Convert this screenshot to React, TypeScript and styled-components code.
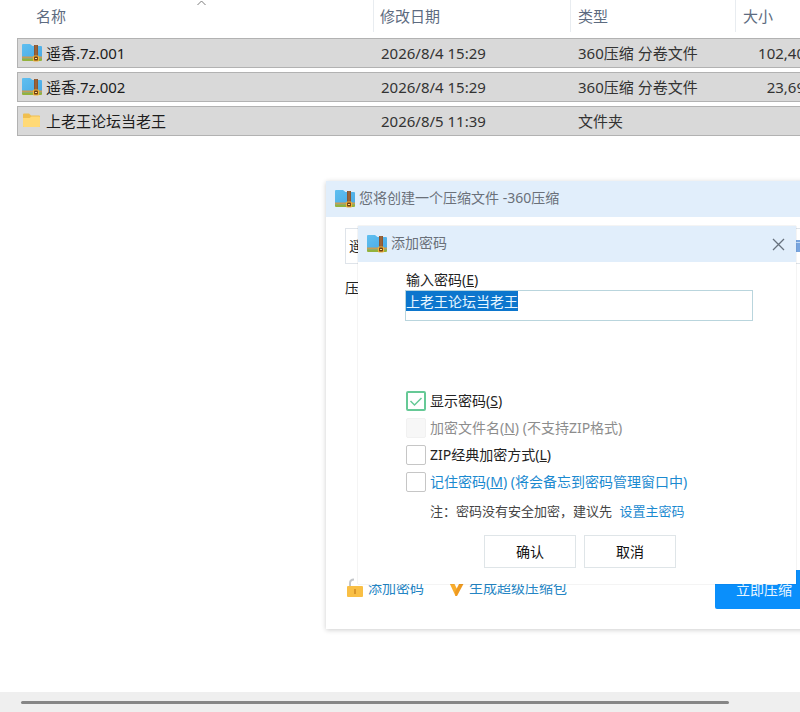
import React, { useEffect, useRef } from 'react';
import styled, { createGlobalStyle, css } from 'styled-components';

const GlobalStyle = createGlobalStyle`
  *, *::before, *::after { box-sizing: border-box; }
  body {
    margin: 0;
    background: #fff;
    color: #222;
    font-family: 'Noto Sans', 'Noto Sans CJK SC', sans-serif;
    font-size: 14px;
    line-height: 20px;
  }
  button, input { font: inherit; color: inherit; }
`;

const Desktop = styled.div`
  position: relative;
  display: flex;
  flex-direction: column;
  height: 100vh;
  overflow: hidden;
`;

const FileList = styled.main`
  flex: 1;
  min-height: 0;
  padding-left: 17px;
  overflow: hidden;
`;

const FileTable = styled.table`
  width: calc(100% + 12px);
  margin-top: -4px;
  table-layout: fixed;
  border-collapse: separate;
  border-spacing: 0 4px;
  font-size: 15px;
`;

const HeaderCell = styled.th<{ $width?: number }>`
  position: relative;
  width: ${(p) => (p.$width ? `${p.$width}px` : 'auto')};
  padding: 0 0 2px;
  color: #5d6b80;
  font-weight: 400;
  text-align: left;
`;

const HeaderLabel = styled.div<{ $indent: number; $divided?: boolean }>`
  height: 32px;
  padding-left: ${(p) => p.$indent}px;
  line-height: 32px;
  border-right: ${(p) => (p.$divided ? '1px solid #e8ecf0' : 'none')};
`;

const SortMark = styled.svg`
  position: absolute;
  top: 0;
  left: 50%;
`;

const Cell = styled.td<{ $first?: boolean; $right?: boolean }>`
  height: 30px;
  padding: 0 7px;
  background: #d9d9d9;
  border: solid #b2b2b2;
  border-width: 1px 0;
  color: #333;
  line-height: 28px;
  white-space: nowrap;
  text-align: ${(p) => (p.$right ? 'right' : 'left')};
  ${(p) =>
    p.$first &&
    css`
      padding: 0 4px;
      border-left-width: 1px;
      color: #1c1c1c;
    `}
`;

const FileName = styled.div`
  display: flex;
  align-items: center;
  gap: 4px;
`;

const ScrollTrack = styled.footer`
  display: flex;
  align-items: center;
  height: 20px;
  padding: 0 71px 0 21px;
  background: #efefef;
`;

const ScrollThumb = styled.div`
  flex: 1;
  height: 3px;
  border-radius: 2px;
  background: #868686;
`;

const CreateWindow = styled.section`
  position: absolute;
  top: 181px;
  left: 326px;
  right: -40px;
  display: flex;
  flex-direction: column;
  height: 448px;
  background: #fff;
  box-shadow: 0 1px 5px rgba(0, 0, 0, 0.2);
`;

const PasswordWindow = styled.section`
  position: absolute;
  top: 226px;
  left: 358px;
  right: 4px;
  background: #fff;
  box-shadow: 0 0 1px rgba(0, 0, 0, 0.25);
`;

const TitleBar = styled.header`
  display: flex;
  align-items: center;
  gap: 4px;
  height: 36px;
  padding: 0 11px 0 9px;
  background: #e1eefb;
  color: #6a7079;
`;

const Title = styled.h2`
  flex: 1;
  margin: 0;
  padding-bottom: 2px;
  font-size: 14px;
  font-weight: 400;
`;

const CloseButton = styled.button`
  display: flex;
  padding: 0;
  border: 0;
  background: none;
`;

const CreateBody = styled.div`
  display: flex;
  flex: 1;
  flex-direction: column;
  align-items: flex-start;
  padding: 11px 27px 20px 19px;
`;

const PathRow = styled.div`
  display: flex;
  align-items: center;
  width: 100%;
  height: 36px;
  padding: 0 8px 0 3px;
  border: 1px solid #dfe4ea;
`;

const PathInput = styled.input`
  flex: 1;
  min-width: 0;
  padding: 0;
  border: 0;
  background: none;
`;

const SettingLabel = styled.div`
  margin-top: 14px;
`;

const CreateFooter = styled.div`
  display: flex;
  align-items: center;
  align-self: stretch;
  gap: 24px;
  margin-top: auto;
`;

const FooterLink = styled.a`
  display: flex;
  align-items: center;
  gap: 4px;
  padding-bottom: 3px;
  color: #2585c4;
  text-decoration: none;
`;

const PrimaryButton = styled.button`
  width: 98px;
  height: 39px;
  margin-left: auto;
  padding: 0;
  border: 0;
  border-radius: 2px;
  background: #0a8ffb;
  color: #e8f5ff;
`;

const PasswordForm = styled.form`
  display: flex;
  flex-direction: column;
  padding: 8px 43px 16px 47px;
`;

const FieldLabel = styled.label`
  padding-left: 1px;
  line-height: 20px;
`;

const PasswordInput = styled.input`
  height: 31px;
  margin-bottom: 70px;
  padding: 0 0 9px;
  border: 1px solid #b9d5dd;
  outline: none;
  line-height: 19px;
  &::selection {
    background: #0c76cd;
    color: #e6f5ff;
  }
`;

const Options = styled.div`
  display: flex;
  flex-direction: column;
  gap: 7px;
`;

const Option = styled.label<{ $tone: string }>`
  display: flex;
  align-items: center;
  gap: 4px;
  padding-left: 1px;
  color: ${(p) => p.$tone};
  white-space: nowrap;
`;

const BoxWrap = styled.span`
  position: relative;
  display: flex;
`;

const Box = styled.input`
  width: 20px;
  height: 20px;
  margin: 0;
  appearance: none;
  border: 1px solid #c6c6c6;
  border-radius: 2px;
  background: #fff;
  &:checked {
    border: 2px solid #66c996;
  }
  &:disabled {
    border-color: #f1f1f1;
    background: #f7f7f7;
  }
  & + svg {
    display: none;
  }
  &:checked + svg {
    display: block;
  }
`;

const BoxTick = styled.svg`
  position: absolute;
  inset: 0;
  pointer-events: none;
`;

const Note = styled.p`
  margin: 9px 0 14px;
  padding-left: 25px;
  color: #444;
  font-size: 13px;
  white-space: nowrap;
`;

const NoteLink = styled.a`
  margin-left: 4px;
  color: #1b8ad0;
  text-decoration: none;
`;

const Actions = styled.div`
  display: flex;
  justify-content: center;
  gap: 8px;
  padding-left: 2px;
`;

const ActionButton = styled.button`
  width: 92px;
  height: 33px;
  padding: 0;
  border: 1px solid #dfe5e8;
  background: #fff;
  color: #111;
`;

const ArchiveIcon = ({ id }: { id: string }) => (
  <svg width="20" height="20" viewBox="0 0 20 20" aria-hidden="true">
    <defs>
      <linearGradient id={id} x1="0" y1="0" x2="1" y2="1">
        <stop offset="0" stopColor="#5fbff0" />
        <stop offset="1" stopColor="#49a9e4" />
      </linearGradient>
    </defs>
    <path d="M0 2q0-1 1-1h7l2.500 2H19q1 0 1 1v12H0z" fill={`url(#${id})`} />
    <path d="M0 13.500h20v2H0z" fill="#c79d55" />
    <path d="M0 15.500h20V17q0 1-1 1H1q-1 0-1-1z" fill="#93b23c" />
    <path d="M12 2h4v16h-4z" fill="#8a5631" />
    <path d="M13.500 2h1v11h-1z" fill="#a87043" />
    <rect x="11.500" y="13" width="5" height="5" rx="1" fill="#6b3c14" stroke="#f3b53a" strokeWidth="1.200" />
    <path d="M13 15.500h2" stroke="#ffe08a" />
  </svg>
);

const FolderIcon = () => (
  <svg width="20" height="20" viewBox="0 0 20 20" aria-hidden="true">
    <path d="M1 3.500q0-1 1-1h5l2 2h8q1 0 1 1V15q0 1-1 1H2q-1 0-1-1z" fill="#f0bf50" />
    <path d="M1 7h6.500l2-1.500H17q1 0 1 1V15q0 1-1 1H2q-1 0-1-1z" fill="#ffd976" />
  </svg>
);

const LockIcon = () => (
  <svg width="19" height="20" viewBox="0 0 19 20" aria-hidden="true">
    <path d="M5 9V5q0-3.500 4-3.500" fill="none" stroke="#c3c6ca" strokeWidth="2" />
    <rect x="2" y="8" width="16" height="11" rx="1" fill="#f9bf45" />
    <path d="M10 11v5" stroke="#d9962a" strokeWidth="2" />
  </svg>
);

const SuperIcon = () => (
  <svg width="17" height="18" viewBox="0 0 17 18" aria-hidden="true">
    <path d="M1 3h4.500l4 8-1 6h-1z" fill="#f9ad2d" />
    <path d="M16.500 3H12L7 13l.5 4h1.500z" fill="#ee9a20" />
  </svg>
);

const BrowseIcon = () => (
  <svg width="18" height="14" viewBox="0 0 18 14" aria-hidden="true">
    <path d="M0 1h18v12H0z" fill="#78a5df" />
    <path d="M0 3.500h18" stroke="#c6dcf5" />
  </svg>
);

const files = [
  { name: '遥香.7z.001', date: '2026/8/4 15:29', type: '360压缩 分卷文件', size: '102,40' },
  { name: '遥香.7z.002', date: '2026/8/4 15:29', type: '360压缩 分卷文件', size: '23,69' },
  { name: '上老王论坛当老王', date: '2026/8/5 11:39', type: '文件夹', size: '', folder: true },
];

const Check = ({
  tone,
  checked,
  disabled,
  children,
}: {
  tone: string;
  checked?: boolean;
  disabled?: boolean;
  children: React.ReactNode;
}) => (
  <Option $tone={tone}>
    <BoxWrap>
      <Box type="checkbox" defaultChecked={checked} disabled={disabled} />
      <BoxTick width="20" height="20" viewBox="0 0 20 20" aria-hidden="true">
        <path d="M4.500 10l4 4L15.500 7" fill="none" stroke="#66c996" strokeWidth="1.500" />
      </BoxTick>
    </BoxWrap>
    <span>{children}</span>
  </Option>
);

export default function App() {
  const password = useRef<HTMLInputElement>(null);

  useEffect(() => {
    password.current?.focus();
    password.current?.select();
  }, []);

  return (
    <>
      <GlobalStyle />
      <Desktop>
        <FileList>
          <FileTable>
            <thead>
              <tr>
                <HeaderCell $width={357}>
                  <HeaderLabel $indent={19} $divided>名称</HeaderLabel>
                  <SortMark width="12" height="6" viewBox="0 0 12 6" aria-hidden="true">
                    <path d="M1.500 5l4-4 4 4" fill="none" stroke="#7d7d7d" />
                  </SortMark>
                </HeaderCell>
                <HeaderCell $width={197}>
                  <HeaderLabel $indent={6} $divided>修改日期</HeaderLabel>
                </HeaderCell>
                <HeaderCell $width={165}>
                  <HeaderLabel $indent={7} $divided>类型</HeaderLabel>
                </HeaderCell>
                <HeaderCell>
                  <HeaderLabel $indent={7}>大小</HeaderLabel>
                </HeaderCell>
              </tr>
            </thead>
            <tbody>
              {files.map((f, i) => (
                <tr key={f.name}>
                  <Cell $first>
                    <FileName>
                      {f.folder ? <FolderIcon /> : <ArchiveIcon id={`file-${i}`} />}
                      {f.name}
                    </FileName>
                  </Cell>
                  <Cell>{f.date}</Cell>
                  <Cell>{f.type}</Cell>
                  <Cell $right>{f.size}</Cell>
                </tr>
              ))}
            </tbody>
          </FileTable>
        </FileList>
        <ScrollTrack>
          <ScrollThumb />
        </ScrollTrack>

        <CreateWindow>
          <TitleBar>
            <ArchiveIcon id="create" />
            <Title>您将创建一个压缩文件 -360压缩</Title>
          </TitleBar>
          <CreateBody>
            <PathRow>
              <PathInput defaultValue="遥" aria-label="压缩文件名" />
              <BrowseIcon />
            </PathRow>
            <SettingLabel>压</SettingLabel>
            <CreateFooter>
              <FooterLink href="#password">
                <LockIcon />
                添加密码
              </FooterLink>
              <FooterLink href="#super">
                <SuperIcon />
                生成超级压缩包
              </FooterLink>
              <PrimaryButton type="button">立即压缩</PrimaryButton>
            </CreateFooter>
          </CreateBody>
        </CreateWindow>

        <PasswordWindow role="dialog" aria-label="添加密码">
          <TitleBar>
            <ArchiveIcon id="password" />
            <Title>添加密码</Title>
            <CloseButton type="button" aria-label="关闭">
              <svg width="13" height="13" viewBox="0 0 13 13" aria-hidden="true">
                <path d="M1 1l11 11M12 1L1 12" fill="none" stroke="#67717d" strokeWidth="1.300" />
              </svg>
            </CloseButton>
          </TitleBar>
          <PasswordForm onSubmit={(e) => e.preventDefault()}>
            <FieldLabel htmlFor="pwd">
              输入密码(<u>E</u>)
            </FieldLabel>
            <PasswordInput id="pwd" ref={password} type="text" defaultValue="上老王论坛当老王" />
            <Options>
              <Check tone="#222" checked>显示密码(<u>S</u>)</Check>
              <Check tone="#8d8d8d" disabled>加密文件名(<u>N</u>) (不支持ZIP格式)</Check>
              <Check tone="#222">ZIP经典加密方式(<u>L</u>)</Check>
              <Check tone="#1b8ad0">记住密码(<u>M</u>) (将会备忘到密码管理窗口中)</Check>
            </Options>
            <Note>
              注：密码没有安全加密，建议先 <NoteLink href="#master">设置主密码</NoteLink>
            </Note>
            <Actions>
              <ActionButton type="submit">确认</ActionButton>
              <ActionButton type="button">取消</ActionButton>
            </Actions>
          </PasswordForm>
        </PasswordWindow>
      </Desktop>
    </>
  );
}
